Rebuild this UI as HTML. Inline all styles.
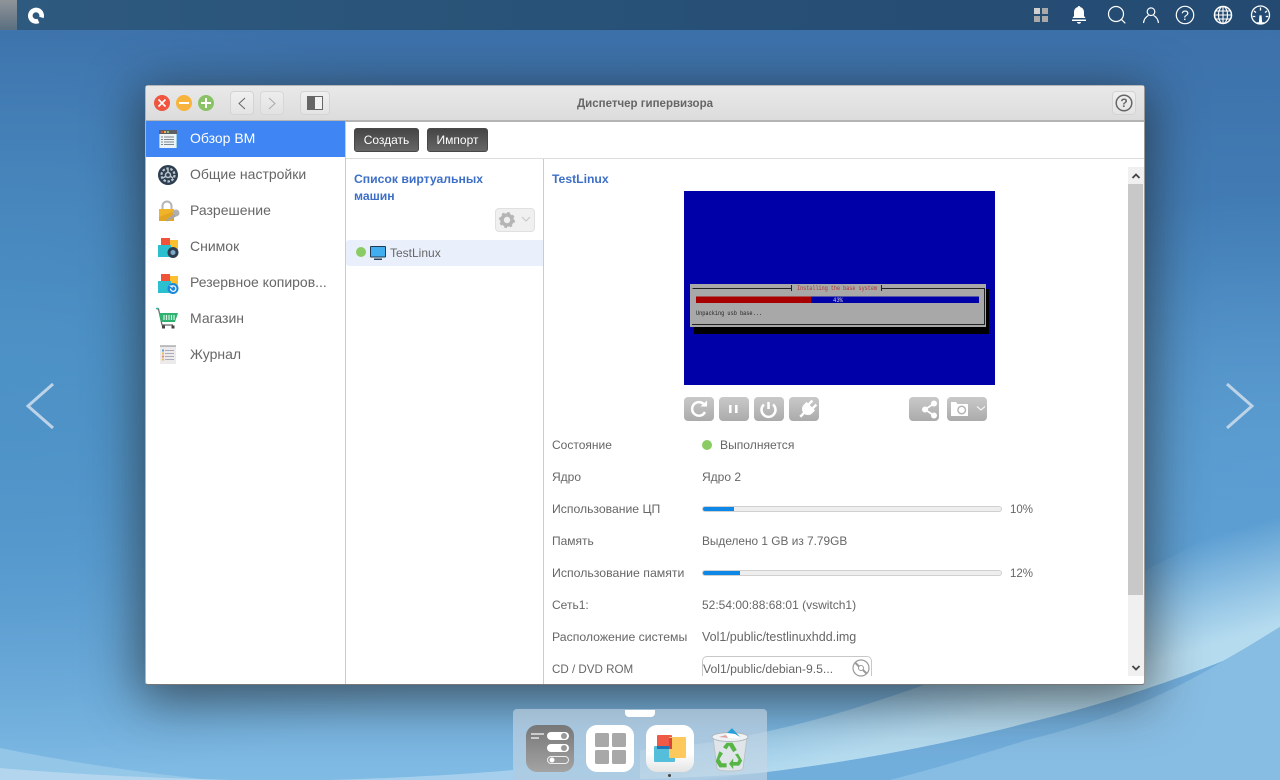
<!DOCTYPE html>
<html><head><meta charset="utf-8"><style>
*{box-sizing:border-box}
html,body{margin:0;padding:0;width:1280px;height:780px;overflow:hidden;font-family:"Liberation Sans",sans-serif;color:#666}
.a{position:absolute}
#bg{left:0;top:0;width:1280px;height:780px}
#top{left:0;top:0;width:1280px;height:30px;background:linear-gradient(90deg,#2f5a80 0,#2a5479 30%,#244a72 100%)}
#win{left:145px;top:85px;width:1000px;height:600px;background:#fff;border:1px solid #b5b5b5;border-bottom:1px solid #777;border-right:1px solid #999;border-radius:3px;box-shadow:0 10px 50px 6px rgba(30,30,30,.62)}
#tb{left:146px;top:86px;width:998px;height:36px;background:linear-gradient(#e9e9e9,#dcdcdc);border-bottom:2px solid #b4b4b4}
.tbb{position:absolute;top:91px;height:24px;border:1px solid #d4d4d4;border-radius:4px;background:linear-gradient(#f0f0f0,#e4e4e4)}
.t{position:absolute;white-space:nowrap;font-size:12px;line-height:16px;color:#666}
.m{position:absolute;left:190px;font-size:14px;line-height:18px;white-space:nowrap;color:#666}
.btn{position:absolute;top:128px;height:24px;border-radius:3px;border:1px solid #484848;background:linear-gradient(#454545,#666);color:#fff;font-size:12px;line-height:22px;text-align:center}
.ctl{position:absolute;top:397px;height:24px;border-radius:4px;background:linear-gradient(#c9c9c9,#ababab)}
.bar{position:absolute;left:702px;width:300px;height:6px;border-radius:3px;background:#eee;border:1px solid #d0d0d0;overflow:hidden}
.bar i{display:block;height:100%;background:#0d88e6}
.dk{position:absolute;top:725px;width:48px;height:47px;border-radius:11px}
</style></head><body>
<svg id="bg" class="a" viewBox="0 0 1280 780">
<defs>
<linearGradient id="g" x1="0" y1="0" x2="0" y2="1"><stop offset="0" stop-color="#3c6fa8"/><stop offset=".35" stop-color="#4480b8"/><stop offset=".7" stop-color="#5f9fd3"/><stop offset="1" stop-color="#80bbe4"/></linearGradient>
<radialGradient id="l" cx="0" cy=".5" r=".5"><stop offset="0" stop-color="#4d93c7" stop-opacity=".9"/><stop offset="1" stop-color="#4d93c7" stop-opacity="0"/></radialGradient>
<radialGradient id="r" cx="1" cy=".6" r=".35"><stop offset="0" stop-color="#5c9fd3" stop-opacity=".8"/><stop offset="1" stop-color="#5c9fd3" stop-opacity="0"/></radialGradient>
<linearGradient id="w" gradientUnits="userSpaceOnUse" x1="1000" y1="600" x2="1030" y2="700"><stop offset="0" stop-color="#b5dbef" stop-opacity="0"/><stop offset="1" stop-color="#b5dbef"/></linearGradient>
</defs>
<rect width="1280" height="780" fill="url(#g)"/>
<rect width="1280" height="780" fill="url(#l)"/>
<rect width="1280" height="780" fill="url(#r)"/>
<path d="M0 748C60 760 110 768 167 775L210 780H0Z" fill="#9ccbe9" opacity=".75"/>
<path d="M0 768C70 774 150 778 230 780H0Z" fill="#b3d6ee"/>
<path d="M330 780C400 778 470 774 513 770V780Z" fill="#a5cfec"/>
<path d="M640 750C700 745 730 740 760 733C830 718 880 700 930 683L1280 500V627C1262 638 1243 650 1223 661C1160 686 1090 708 1027 723C970 738 870 760 760 773C720 776 680 778 640 779Z" fill="url(#w)"/>
<path d="M760 773C870 760 970 738 1027 723C1090 708 1160 686 1223 661C1160 700 1090 725 1027 740C980 755 930 770 890 780H700Z" fill="#72aedc"/>
<path d="M890 780C930 770 980 755 1027 740C1090 725 1160 700 1223 661C1243 650 1262 638 1280 627V780Z" fill="#88bde3"/>
</svg>
<div id="top" class="a"></div>
<div class="a" style="left:0;top:0;width:17px;height:30px;background:linear-gradient(#8f9499,#5b6f80)"></div>
<svg class="a" style="left:26px;top:5px" width="20" height="20" viewBox="0 0 20 20"><circle cx="10" cy="10.700" r="5.700" fill="none" stroke="#fff" stroke-width="4.600" stroke-dasharray="30.900 4.900" transform="rotate(65 10 10.700)"/></svg>

<svg class="a" style="left:1034px;top:8px" width="14" height="14"><path d="M0 0h6v6H0z" fill="#d0d0d0"/><path d="M8 0h6v6H8zM0 8h6v6H0zM8 8h6v6H8z" fill="#a9a9a9"/></svg>
<svg class="a" style="left:1071px;top:5px" width="16" height="20" viewBox="0 0 16 20" fill="#fff"><path d="M8 1c.8 0 1.200.5 1.300 1.100C11.500 2.700 13 4.600 13 7v4l1.500 2h-13L3 11V7c0-2.400 1.500-4.300 3.700-4.900C6.800 1.500 7.200 1 8 1Z"/><path d="M1 14.500h14v1.500H1z"/><path d="M6 17h4c0 1-.9 1.700-2 1.700S6 18 6 17Z"/></svg>
<svg class="a" style="left:1107px;top:5px" width="20" height="20" fill="none" stroke="#fff" stroke-width="1.200"><circle cx="9" cy="9" r="7.500"/><path d="M14.300 14.300l4 4"/></svg>
<svg class="a" style="left:1142px;top:6px" width="18" height="18" fill="none" stroke="#fff" stroke-width="1.200"><circle cx="9" cy="5.700" r="3.800"/><path d="M1.500 17c.5-4 3-6.500 5-7.600M16.500 17c-.5-4-3-6.500-5-7.600"/></svg>
<svg class="a" style="left:1175px;top:5px" width="20" height="20" fill="none" stroke="#fff" stroke-width="1.200"><circle cx="10" cy="10" r="8.700"/></svg>
<div class="a" style="left:1175px;top:5px;width:20px;height:20px;text-align:center;font-size:14px;line-height:20px;color:#fff">?</div>
<svg class="a" style="left:1213px;top:5px" width="20" height="20" fill="none" stroke="#fff" stroke-width="1.100"><circle cx="10" cy="10" r="8.500" stroke-width="1.500"/><ellipse cx="10" cy="10" rx="4.500" ry="8.500"/><path d="M10 1.500v17M1.500 10h17M2.700 6h14.600M2.700 14h14.600"/></svg>
<svg class="a" style="left:1250px;top:5px" width="21" height="20" fill="none" stroke="#fff" stroke-width="1.300"><circle cx="10.500" cy="10" r="9"/><path d="M10.500 2.500v3M4 6l2 1.500M17 6l-2 1.500M2.800 11.500h2.500M18.200 11.500h-2.500"/><path d="M9.500 18l.5-7h1l.5 7z" fill="#fff"/><path d="M7 18h7" stroke-width="1.500"/></svg>

<svg class="a" style="left:25px;top:382px" width="30" height="48" fill="none" stroke="#bcd3e8" stroke-width="3"><path d="M28 2 3 24l25 22"/></svg>
<svg class="a" style="left:1225px;top:382px" width="30" height="48" fill="none" stroke="#bcd3e8" stroke-width="3"><path d="M2 2l25 22L2 46"/></svg>

<div id="win" class="a"></div>
<div id="tb" class="a"></div>
<svg class="a" style="left:153px;top:94px" width="62" height="18">
<circle cx="9" cy="9" r="8" fill="#f0553f"/><path d="M5.500 5.500l7 7M12.500 5.500l-7 7" stroke="#fff" stroke-width="1.600"/>
<circle cx="31" cy="9" r="8" fill="#f8b33c"/><path d="M26 9h10" stroke="#fff" stroke-width="2"/>
<circle cx="53" cy="9" r="8" fill="#8ac366"/><path d="M48 9h10M53 4v10" stroke="#fff" stroke-width="2"/>
</svg>
<div class="tbb" style="left:230px;width:24px"></div>
<svg class="a" style="left:237px;top:97px" width="10" height="13" fill="none" stroke="#666" stroke-width="1"><path d="M8 1 2 6.500 8 12"/></svg>
<div class="tbb" style="left:260px;width:24px;opacity:.75"></div>
<svg class="a" style="left:267px;top:97px" width="10" height="13" fill="none" stroke="#aaa" stroke-width="1"><path d="M2 1l6 5.500L2 12"/></svg>
<div class="tbb" style="left:300px;width:30px"></div>
<svg class="a" style="left:307px;top:96px" width="16" height="14"><rect width="16" height="14" fill="#666"/><rect x="8" y="1" width="7" height="12" fill="#f2f2f2"/></svg>
<div class="t" style="left:146px;width:998px;top:96px;text-align:center;font-size:11.500px;font-weight:bold;color:#666">Диспетчер гипервизора</div>
<div class="tbb" style="left:1112px;width:24px"></div>
<svg class="a" style="left:1115px;top:94px" width="18" height="18" fill="none" stroke="#666" stroke-width="1.500"><circle cx="9" cy="9" r="7.800"/></svg>
<div class="a" style="left:1115px;top:94px;width:18px;text-align:center;font-size:12px;font-weight:bold;line-height:18px;color:#666">?</div>

<!-- sidebar -->
<div class="a" style="left:146px;top:121px;width:199px;height:36px;background:#3f85f3"></div>
<div class="a" style="left:345px;top:122px;width:1px;height:562px;background:#ccc"></div>
<div class="a" style="left:346px;top:158px;width:798px;height:1px;background:#ddd"></div>
<div class="a" style="left:543px;top:159px;width:1px;height:525px;background:#ccc"></div>
<div class="m" style="top:129px;color:#fff">Обзор ВМ</div>
<div class="m" style="top:165px">Общие настройки</div>
<div class="m" style="top:201px">Разрешение</div>
<div class="m" style="top:237px">Снимок</div>
<div class="m" style="top:273px">Резервное копиров...</div>
<div class="m" style="top:309px">Магазин</div>
<div class="m" style="top:345px">Журнал</div>

<svg class="a" style="left:159px;top:130px" width="18" height="18"><rect width="18" height="18" fill="#eef3f5"/><rect width="18" height="4" fill="#5a6066"/><path d="M2 1h2v2H2z" fill="#d5544a"/><path d="M5 1h2v2H5z" fill="#e9b44c"/><path d="M8 1h2v2H8z" fill="#8dc26a"/><path d="M5 7h10M5 9.500h10M5 12h10M5 14.500h10" stroke="#7d8a93"/><path d="M2 7h2M2 9.500h2M2 12h2M2 14.500h2" stroke="#7d8a93"/><path d="M.5 4v14M17.500 4v14" stroke="#9fd0ea"/></svg>
<svg class="a" style="left:158px;top:165px" width="20" height="20"><circle cx="10" cy="10" r="10" fill="#2c3e50"/><circle cx="10" cy="10" r="6.500" fill="none" stroke="#b9c4cc" stroke-width="2.200" stroke-dasharray="2.500 1.600"/><circle cx="10" cy="10" r="2.500" fill="none" stroke="#b9c4cc" stroke-width="1.500"/><path d="M10 4v3.500M4.800 13l3-1.700M15.200 13l-3-1.700" stroke="#b9c4cc" stroke-width="1.500"/></svg>
<svg class="a" style="left:158px;top:200px" width="22" height="22"><path d="M4.500 9V6a4.500 4.500 0 0 1 9 0v3" fill="none" stroke="#b5b5b5" stroke-width="2"/><path d="M1 9h15v12H1z" fill="#f0b429"/><path d="M1 17l15-6v10H1z" fill="#dc9d1c" opacity=".6"/><circle cx="18" cy="13" r="3.500" fill="#b0b0b0"/><path d="M16 14l-8 6 1 1.500 9-5z" fill="#a5a5a5"/></svg>
<svg class="a" style="left:158px;top:238px" width="22" height="20"><rect x="11" y="2" width="9" height="11" fill="#fcc02e"/><rect x="3" y="0" width="9" height="8" fill="#f0533a"/><rect y="7" width="13" height="12" x="0" fill="#2bbfcf"/><circle cx="15" cy="14.500" r="5.500" fill="#2d3e50"/><circle cx="15" cy="14.500" r="2.500" fill="#7fa8c8"/></svg>
<svg class="a" style="left:158px;top:274px" width="22" height="20"><rect x="11" y="2" width="9" height="11" fill="#fcc02e"/><rect x="3" y="0" width="9" height="8" fill="#f0533a"/><rect y="7" width="13" height="12" x="0" fill="#2bbfcf"/><circle cx="15" cy="14.500" r="5.500" fill="#1c88d9"/><path d="M12.500 14.500a2.700 2.700 0 1 0 1-2" fill="none" stroke="#fff" stroke-width="1.200"/><path d="M11 11.500h3.500v2.500z" fill="#fff"/></svg>
<svg class="a" style="left:156px;top:307px" width="23" height="22"><path d="M1 2h1.500l3.500 16h11" fill="none" stroke="#666" stroke-width="1.200"/><path d="M0 1.500h2.500" stroke="#2bbf9f" stroke-width="1.500"/><path d="M3 6h19l-3 9H5z" fill="#2db36f"/><path d="M8 8v5M10.500 8v5M13 8v5M15.500 8v5M18 8v5" stroke="#d7f3e3" stroke-width="1.200"/><rect x="6" y="18.500" width="3" height="3" fill="#444"/><rect x="15.500" y="18.500" width="3" height="3" fill="#444"/></svg>
<svg class="a" style="left:160px;top:345px" width="16" height="19"><rect y="1" width="16" height="18" fill="#eceaea"/><path d="M1 2v-2M3 2v-2M5 2v-2M7 2v-2M9 2v-2M11 2v-2M13 2v-2M15 2v-2" stroke="#888"/><path d="M5 5.500h9M5 8.500h9M5 11.500h9M5 14.500h9" stroke="#aab"/><path d="M2 4.500h2v2H2z" fill="#5a9fd8"/><path d="M2 7.500h2v2H2z" fill="#e6b95c"/><path d="M2 10.500h2v2H2z" fill="#e28a74"/><path d="M2 13.500h2v2H2z" fill="#e6b95c"/></svg>

<!-- toolbar -->
<div class="btn" style="left:354px;width:65px">Создать</div>
<div class="btn" style="left:427px;width:61px">Импорт</div>

<!-- list -->
<div class="t" style="left:354px;top:171px;font-weight:bold;font-size:12.200px;line-height:17px;color:#3d6fc7">Список виртуальных<br>машин</div>
<div class="a" style="left:495px;top:208px;width:40px;height:24px;background:#f0f0f0;border:1px solid #e0e0e0;border-radius:4px"></div>
<svg class="a" style="left:499px;top:212px" width="16" height="16" viewBox="0 0 16 16"><circle cx="8" cy="8" r="5" fill="none" stroke="#b5b5b5" stroke-width="3.600"/><circle cx="8" cy="8" r="7" fill="none" stroke="#b5b5b5" stroke-width="2" stroke-dasharray="2.700 2.800"/></svg>
<svg class="a" style="left:521px;top:216px" width="10" height="7" fill="none" stroke="#c5c5c5"><path d="M1 1l4 4 4-4"/></svg>
<div class="a" style="left:346px;top:240px;width:197px;height:26px;background:#e9f0fb;border-radius:3px 0 0 3px"></div>
<div class="a" style="left:356px;top:247px;width:10px;height:10px;border-radius:50%;background:#8acb63"></div>
<svg class="a" style="left:370px;top:246px" width="16" height="15"><rect width="16" height="11.500" rx="1" fill="#1f3a52"/><rect x="1" y="1" width="14" height="9.500" fill="#41aef0"/><path d="M4 12.500h8V14H4z" fill="#2a4258"/></svg>
<div class="t" style="left:390px;top:245px">TestLinux</div>

<!-- details -->
<div class="t" style="left:552px;top:171px;font-weight:bold;font-size:12.200px;color:#3d6fc7">TestLinux</div>
<svg class="a" style="left:684px;top:191px;filter:blur(.35px)" width="311" height="194" viewBox="0 0 311 194">
<rect width="311" height="194" fill="#0000a8"/>
<rect x="10" y="98" width="295" height="45" fill="#000"/>
<rect x="6" y="93" width="296" height="43" fill="#a8a8a8"/>
<path d="M8.500 97.500H107M197 97.500H300M300.500 97v36M8 133.500h293" stroke="#222" stroke-width="1" fill="none"/>
<path d="M107.500 94v6M197.500 94v6" stroke="#222"/>
<rect x="12" y="105.500" width="115" height="6.500" fill="#a80000"/>
<rect x="127" y="105.500" width="168" height="6.500" fill="#0000a8"/>
<text x="149" y="111" font-size="6" fill="#ddd" font-family="Liberation Mono,monospace" textLength="10" lengthAdjust="spacingAndGlyphs">43%</text>
<text x="113" y="99" font-size="6" fill="#a33" font-family="Liberation Mono,monospace" textLength="80" lengthAdjust="spacingAndGlyphs">Installing the base system</text>
<text x="12" y="124" font-size="6.200" fill="#222" font-family="Liberation Mono,monospace" textLength="66" lengthAdjust="spacingAndGlyphs">Unpacking usb base...</text>
</svg>
<div class="ctl" style="left:684px;width:30px"></div>
<div class="ctl" style="left:719px;width:30px"></div>
<div class="ctl" style="left:754px;width:30px"></div>
<div class="ctl" style="left:789px;width:30px"></div>
<div class="ctl" style="left:909px;width:30px"></div>
<div class="ctl" style="left:947px;width:40px"></div>
<svg class="a" style="left:684px;top:397px" width="310" height="24" fill="none" stroke="#fff" stroke-width="2.500">
<path d="M20.500 8a6.800 6.800 0 1 0 .5 7"/><path d="M16.500 9.500H23V3.500z" fill="#fff" stroke="none"/>
<path d="M46.300 8v8M52.300 8v8"/>
<path d="M80 7.500a7 7 0 1 0 9 0M84.500 5v7"/>
<g transform="rotate(45 124 12)" fill="#fff" stroke="none"><path d="M118 8h12v4a6 6 0 0 1-12 0z"/><rect x="120" y="3" width="2.400" height="6"/><rect x="125.600" y="3" width="2.400" height="6"/><rect x="122.800" y="15" width="2.400" height="8"/></g>
<path d="M241 12.500l9-6M241 12.500l9 6" stroke-width="1.800"/><g fill="#fff" stroke="none"><circle cx="241" cy="12.500" r="3"/><circle cx="250" cy="6.500" r="3"/><circle cx="250" cy="18.500" r="3"/></g>
<path d="M267 5h5l1.500 2H284V19H267z" fill="#fff" stroke="none"/><circle cx="277.700" cy="13" r="3.800" stroke="#b5b5b5" stroke-width="1.500" fill="#fff"/>
<path d="M293 9.500l4 3.500 4-3.500" stroke-width="1"/>
</svg>

<div class="t" style="left:552px;top:437px">Состояние</div>
<div class="a" style="left:702px;top:440px;width:10px;height:10px;border-radius:50%;background:#8acb63"></div>
<div class="t" style="left:720px;top:437px;font-size:12.100px">Выполняется</div>
<div class="t" style="left:552px;top:469px">Ядро</div>
<div class="t" style="left:702px;top:469px">Ядро 2</div>
<div class="t" style="left:552px;top:501px;font-size:12.200px">Использование ЦП</div>
<div class="bar" style="top:506px"><i style="width:31px"></i></div>
<div class="t" style="left:1010px;top:502px;font-size:11.500px">10%</div>
<div class="t" style="left:552px;top:533px">Память</div>
<div class="t" style="left:702px;top:533px;font-size:11.850px">Выделено 1 GB из 7.79GB</div>
<div class="t" style="left:552px;top:565px;font-size:12.300px">Использование памяти</div>
<div class="bar" style="top:570px"><i style="width:37px"></i></div>
<div class="t" style="left:1010px;top:566px;font-size:11.500px">12%</div>
<div class="t" style="left:552px;top:597px">Сеть1:</div>
<div class="t" style="left:702px;top:597px">52:54:00:88:68:01 (vswitch1)</div>
<div class="t" style="left:552px;top:629px;font-size:12.250px">Расположение системы</div>
<div class="t" style="left:702px;top:629px;font-size:12.500px">Vol1/public/testlinuxhdd.img</div>
<div class="t" style="left:552px;top:662px;font-size:11.600px">CD / DVD ROM</div>
<div class="a" style="left:702px;top:656px;width:170px;height:20px;border:1px solid #c8c8c8;border-bottom:0;border-radius:5px 5px 0 0"></div>
<div class="t" style="left:703px;top:661px;font-size:12.200px">Vol1/public/debian-9.5...</div>
<svg class="a" style="left:852px;top:659px" width="18" height="18" fill="none" stroke="#999"><circle cx="9" cy="9" r="8" stroke-width="1.200"/><circle cx="9" cy="9" r="2.500"/><path d="M3.500 4l3.500 3.500M11 11l3.500 3.500" stroke-width="2"/></svg>

<!-- scrollbar -->
<div class="a" style="left:1128px;top:167px;width:16px;height:509px;background:#f0f0f0"></div>
<div class="a" style="left:1128px;top:184px;width:15px;height:411px;background:#c8c8c8"></div>
<svg class="a" style="left:1131px;top:172px" width="10" height="8" fill="none" stroke="#444" stroke-width="1.800"><path d="M1.500 6 5 2.500 8.500 6"/></svg>
<svg class="a" style="left:1131px;top:664px" width="10" height="8" fill="none" stroke="#444" stroke-width="1.800"><path d="M1.500 2 5 5.500 8.500 2"/></svg>

<!-- dock -->
<div class="a" style="left:513px;top:709px;width:254px;height:71px;background:rgba(200,215,228,.62);border-radius:4px 4px 0 0"></div>
<div class="a" style="left:625px;top:710px;width:30px;height:7px;background:#fff;border-radius:0 0 4px 4px"></div>
<div class="dk" style="left:526px;background:linear-gradient(#777,#a3a3a3)"></div>
<svg class="a" style="left:526px;top:725px" width="48" height="47"><path d="M5 9h13M5 13h8" stroke="#ccc" stroke-width="2"/><rect x="21" y="7" width="22" height="8" rx="4" fill="#fff"/><circle cx="38" cy="11" r="3" fill="#999"/><rect x="21" y="19" width="22" height="8" rx="4" fill="#fff"/><circle cx="38" cy="23" r="3" fill="#999"/><rect x="21.500" y="31.500" width="21" height="7" rx="3.500" fill="none" stroke="#eee"/><circle cx="26" cy="35" r="2.500" fill="#fff"/></svg>
<div class="dk" style="left:586px;background:#fff"></div>
<svg class="a" style="left:595px;top:733px" width="31" height="31" fill="#a8a8a8"><rect width="14" height="14" rx="1.500"/><rect x="17" width="14" height="14" rx="1.500"/><rect y="17" width="14" height="14" rx="1.500"/><rect x="17" y="17" width="14" height="14" rx="1.500"/></svg>
<div class="dk" style="left:646px;background:linear-gradient(#fff 60%,#e4e4e4)"></div>
<svg class="a" style="left:654px;top:734px" width="32" height="29"><rect x="0" y="12" width="21" height="16" rx="1" fill="#55bedb"/><rect x="3" y="1" width="15" height="14" rx="1" fill="#ef5a47"/><rect x="15" y="3" width="17" height="21" rx="1" fill="#fdc95c"/><path d="M15 4h3v11h-3z" fill="#d9433a"/><path d="M3 12h12v3H3z" fill="#1f78b4"/></svg>
<div class="a" style="left:668px;top:774px;width:3px;height:3px;border-radius:50%;background:#444"></div>
<svg class="a" style="left:710px;top:726px" width="40" height="46">
<path d="M3 11h34l-4 31c0 2-5 3-13 3s-13-1-13-3Z" fill="#dfe5e8" stroke="#b8bec2" stroke-width=".8"/>
<ellipse cx="20" cy="11" rx="18" ry="4.500" fill="#eef2f4" stroke="#aeb5ba"/>
<path d="M13 12l9-10 8 10z" fill="#fff"/><path d="M17 7l5-5 8 9-5-3z" fill="#25a0d8"/>
<path d="M9 11l7-2 2 3z" fill="#d88" opacity=".8"/>
<g transform="translate(-3.800 -6) scale(1.200)"><path d="M17 19l5 0 3.500 6-3 1.800-3.500-5.500-2 3.200-3-1.800zM26.500 28l3.500 6-2.500 4h-5v3l-3.500-4.500 3.500-4.500v3h3.500l1-2-3-4.500zM11 26l3 1.800-3 4.700 2 3.500h4v3.500h-6l-3-5z" fill="#56b545"/></g>
</svg>
</body></html>
